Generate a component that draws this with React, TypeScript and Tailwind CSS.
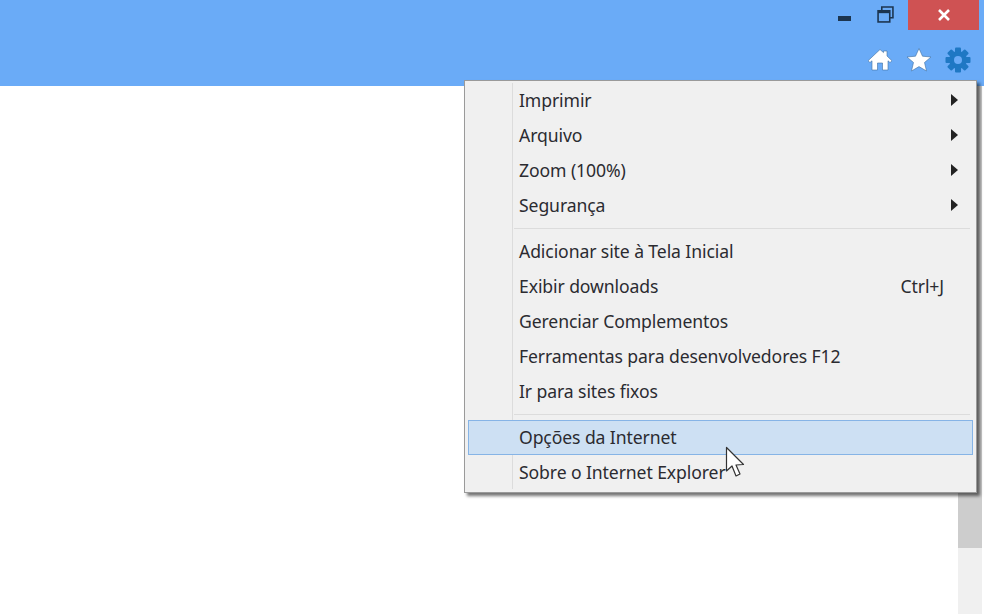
import { ReactNode } from "react";

const font = { fontFamily: '"Noto Sans", "Open Sans", sans-serif' };

function Arrow() {
  return (
    <svg width="9" height="14" viewBox="0 0 9 14" className="absolute right-[13px] top-[9px]">
      <path d="M1 1 L8 7 L1 13 Z" fill="#222" />
    </svg>
  );
}

function Row({ label, sub, hint, active }: { label: string; sub?: boolean; hint?: string; active?: boolean }) {
  return (
    <div
      className={
        "relative h-[35px] flex items-center pl-[50px] pb-[1px] text-[17.6px] text-[#2b2b30] tracking-[-0.1px] whitespace-nowrap border " +
        (active ? "bg-[#cde0f3] border-[#86b4e6]" : "border-transparent")
      }
    >
      {label}
      {hint && <span className="absolute right-[28px]">{hint}</span>}
      {sub && <Arrow />}
    </div>
  );
}

function Sep({ children }: { children?: ReactNode }) {
  return <div className="h-[1px] my-[5px] ml-[46px] mr-[3px] bg-[#dcdcdc]">{children}</div>;
}

export default function App() {
  return (
    <div className="relative w-[984px] h-[614px] overflow-hidden bg-white flex flex-col" style={font}>
      <div className="h-[86px] bg-[#6aabf7] flex flex-col items-end shrink-0">
        <div className="flex items-start pr-[5px]">
          <div className="w-[13px] h-[5px] bg-[#1c3550] mt-[16px] mr-[26px]" />
          <svg width="17" height="17" viewBox="0 0 16 16" className="mt-[6px] mr-[14px]" fill="none" stroke="#1c3550" strokeWidth="1.5">
            <path d="M4.5 4 V1 H15 V11 H12" />
            <rect x="1" y="4.5" width="11" height="10.5" />
            <path d="M1 5.5 H12" strokeWidth="2.5" />
          </svg>
          <div className="w-[71px] h-[30px] bg-[#cf5253] flex items-center justify-center">
            <svg width="14" height="14" viewBox="0 0 14 14" stroke="#fff" strokeWidth="2.6">
              <path d="M2 2 L12 12 M12 2 L2 12" />
            </svg>
          </div>
        </div>
        <div className="flex items-center gap-[12px] pr-[13px] mt-[17px]">
          <svg width="26" height="26" viewBox="0 0 26 24">
            <path
              d="M13 1.5 L16.5 4.6 V3 H20 V8 L25 12.8 L23 14.5 L21 12.8 V22 H15.5 V15 H10.5 V22 H5 V12.8 L3 14.5 L1 12.8 Z"
              fill="#fff"
              stroke="#3f6f9f"
              strokeWidth="0.6"
              strokeLinejoin="round"
            />
          </svg>
          <svg width="28" height="26" viewBox="0 0 27 26">
            <path
              d="M13.5 1.5 L17 9.2 L25.5 10 L19 15.5 L21 24 L13.5 19.6 L6 24 L8 15.5 L1.5 10 L10 9.2 Z"
              fill="#fff"
              stroke="#3f6f9f"
              strokeWidth="0.6"
              strokeLinejoin="round"
            />
          </svg>
          <svg width="26" height="26" viewBox="0 0 26 26">
            <g fill="#1f78c4">
              <circle cx="13" cy="13" r="9" />
              {[0, 45, 90, 135, 180, 225, 270, 315].map(a => (
                <rect key={a} x="10" y="0.5" width="6" height="6" rx="1" transform={`rotate(${a} 13 13)`} />
              ))}
            </g>
            <circle cx="13" cy="13" r="4" fill="#6aabf7" />
          </svg>
        </div>
      </div>

      <div className="flex-1 flex justify-end pr-[2px]">
        <div className="w-[24px] bg-[#f0f0f0] flex flex-col">
          <div className="h-[462px] bg-[#cdcdcd]" />
        </div>
      </div>

      <div className="absolute left-[464px] top-[80px] w-[513px] h-[413px] bg-[#f0f0f0] border border-[#9a9a9a] shadow-[3px_3px_3px_rgba(0,0,0,0.55)] pt-[2px] px-[3px]">
        <div className="absolute left-[47px] top-[2px] bottom-[3px] w-[1px] bg-[#dcdcdc]" />
        <div className="relative">
          <Row label="Imprimir" sub />
          <Row label="Arquivo" sub />
          <Row label="Zoom (100%)" sub />
          <Row label="Segurança" sub />
          <Sep />
          <Row label="Adicionar site à Tela Inicial" />
          <Row label="Exibir downloads" hint="Ctrl+J" />
          <Row label="Gerenciar Complementos" />
          <Row label="Ferramentas para desenvolvedores F12" />
          <Row label="Ir para sites fixos" />
          <Sep />
          <Row label="Opções da Internet" active />
          <Row label="Sobre o Internet Explorer" />
        </div>
      </div>

      <svg width="22" height="34" viewBox="0 0 22 34" className="absolute left-[725px] top-[446px]">
        <path d="M1.5 1.5 V25 L7 20 L11 30 L15 28 L11 19 L18.5 18.5 Z" fill="#fff" stroke="#333" strokeWidth="1.2" strokeLinejoin="round" />
      </svg>
    </div>
  );
}
